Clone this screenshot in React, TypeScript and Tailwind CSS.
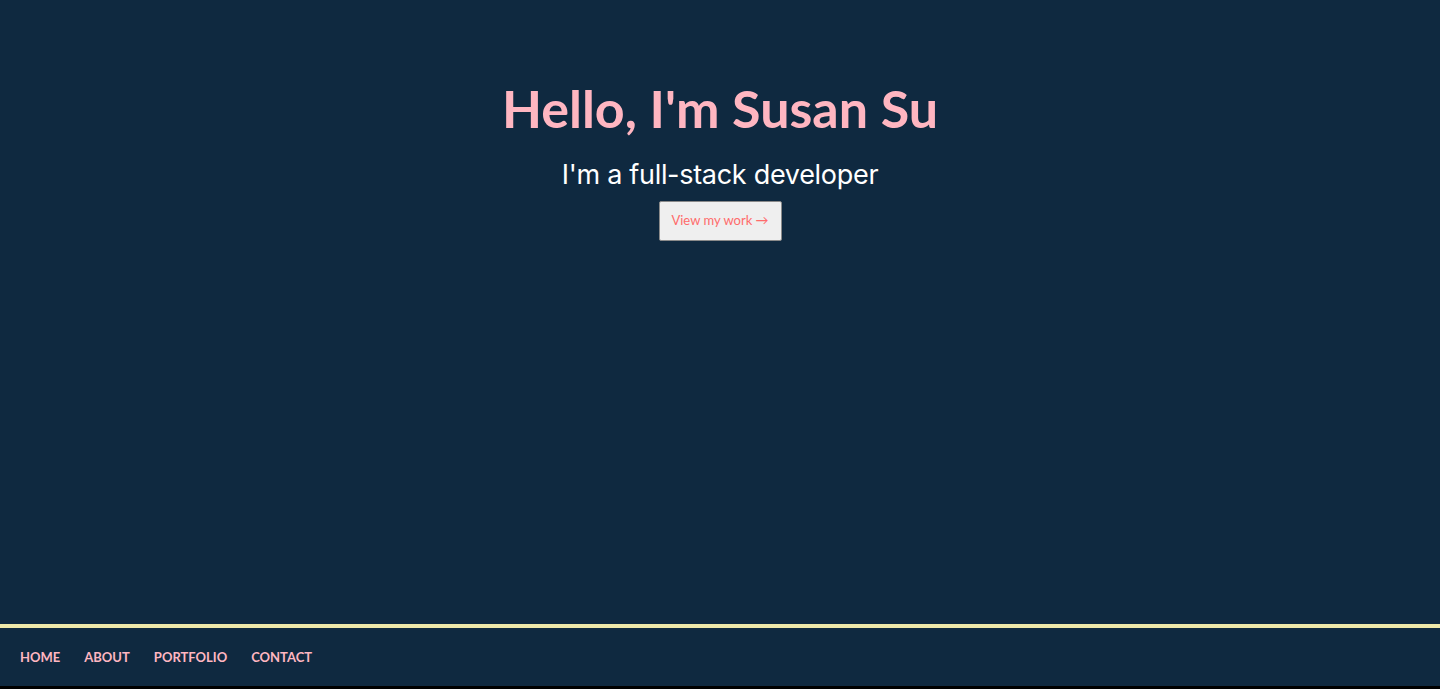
import React from 'react';

const links = ['HOME', 'ABOUT', 'PORTFOLIO', 'CONTACT'];

const App: React.FC = () => (
  <div className="flex h-[689px] flex-col bg-black">
    <section className="flex flex-1 flex-col items-center bg-[#0f2940] pt-[77px]">
      <h1 className="font-['Lato',sans-serif] text-[52px] font-bold leading-[62px] text-[#ffb6c1]">
        Hello, I'm Susan Su
      </h1>
      <p className="mt-[18px] font-['Inter',sans-serif] text-[27px] leading-[36px] tracking-[-0.3px] text-white">
        I'm a full-stack developer
      </p>
      <button className="mt-[8px] h-[40px] w-[123px] rounded-[2px] border border-[#8a8a8a] bg-[#efefef] font-['Lato',sans-serif] text-[13px] text-[#ff6b6b]">
        View my work →
      </button>
    </section>
    <nav className="mb-[3px] border-t-4 border-[#eee8aa] bg-[#0f2940]">
      <ul className="flex h-[58px] items-center gap-[24px] px-[20px] pt-[2px]">
        {links.map((link) => (
          <li key={link} className="font-['Lato',sans-serif] text-[13px] font-bold text-[#ffb6c1]">
            {link}
          </li>
        ))}
      </ul>
    </nav>
  </div>
);

export default App;
